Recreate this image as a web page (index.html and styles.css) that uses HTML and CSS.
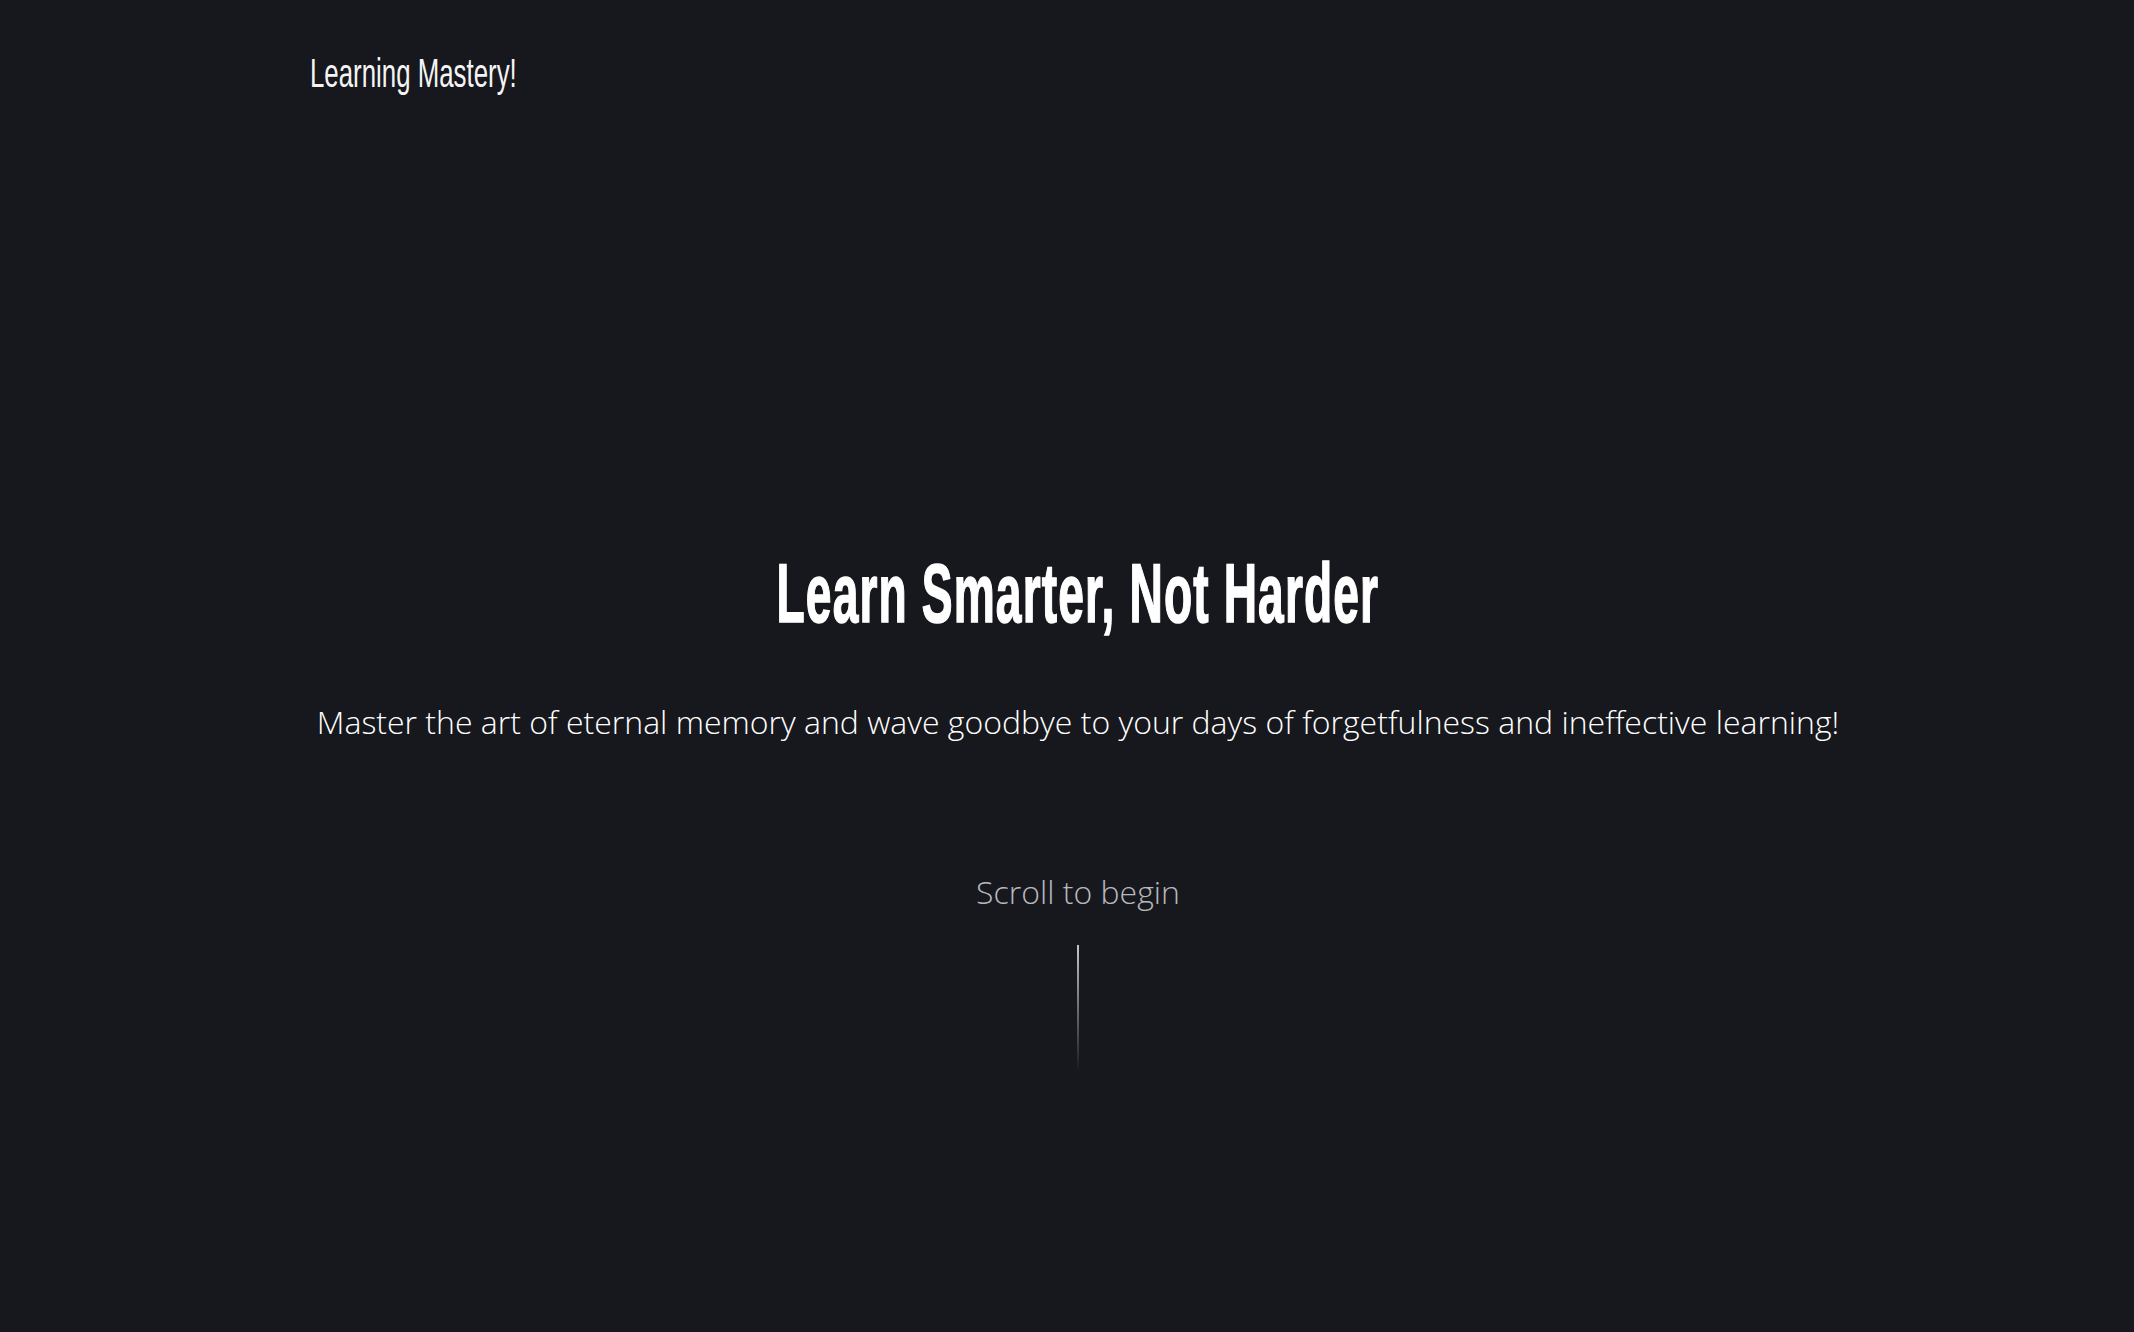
FILE: index.html
```html
<!DOCTYPE html>
<html lang="en">
<head>
<meta charset="utf-8">
<title>Learning Mastery!</title>
<link rel="stylesheet" href="styles.css">
</head>
<body>
<div class="page">
  <header class="header">
    <span class="logo">Learning Mastery!</span>
  </header>
  <main class="hero">
    <h1 class="title"><span class="title-inner">Learn Smarter, Not Harder</span></h1>
    <p class="subtitle">Master the art of eternal memory and wave goodbye to your days of forgetfulness and ineffective learning!</p>
    <p class="scroll">Scroll to begin</p>
    <div class="scroll-line"></div>
  </main>
</div>
</body>
</html>
```

FILE: styles.css
```css
html, body {
  margin: 0;
  padding: 0;
  background: #17181d;
  color: #ffffff;
}
.page {
  width: 1536px;
  margin: 0 auto;
  min-height: 1332px;
}
.header {
  padding: 53px 0 0 11px;
  height: 41px;
}
.logo {
  display: inline-block;
  font-family: "Liberation Sans", sans-serif;
  font-size: 41px;
  line-height: 41px;
  font-weight: 400;
  transform: scaleX(0.63);
  transform-origin: left center;
  white-space: nowrap;
  color: #f4f4f5;
}
.hero {
  display: flex;
  flex-direction: column;
  align-items: center;
  padding-left: 22px;
  padding-top: 456px;
}
.title {
  margin: 0;
  font-family: "Liberation Sans", sans-serif;
  font-weight: 700;
  font-size: 84px;
  line-height: 86px;
  white-space: nowrap;
}
.title-inner {
  display: inline-block;
  transform: scaleX(0.55);
  -webkit-text-stroke: 1.6px #ffffff;
  letter-spacing: 2px;
}
.subtitle {
  margin: 66px 0 0;
  font-family: "Open Sans", sans-serif;
  font-weight: 300;
  font-size: 32px;
  line-height: 40px;
  white-space: nowrap;
}
.scroll {
  margin: 130px 0 0;
  font-family: "Open Sans", sans-serif;
  font-weight: 300;
  font-size: 32px;
  line-height: 40px;
  color: #b8b8bc;
}
.scroll-line {
  margin-top: 33px;
  width: 2px;
  height: 127px;
  background: linear-gradient(to bottom, rgba(255,255,255,0.75), rgba(255,255,255,0));
}
```
